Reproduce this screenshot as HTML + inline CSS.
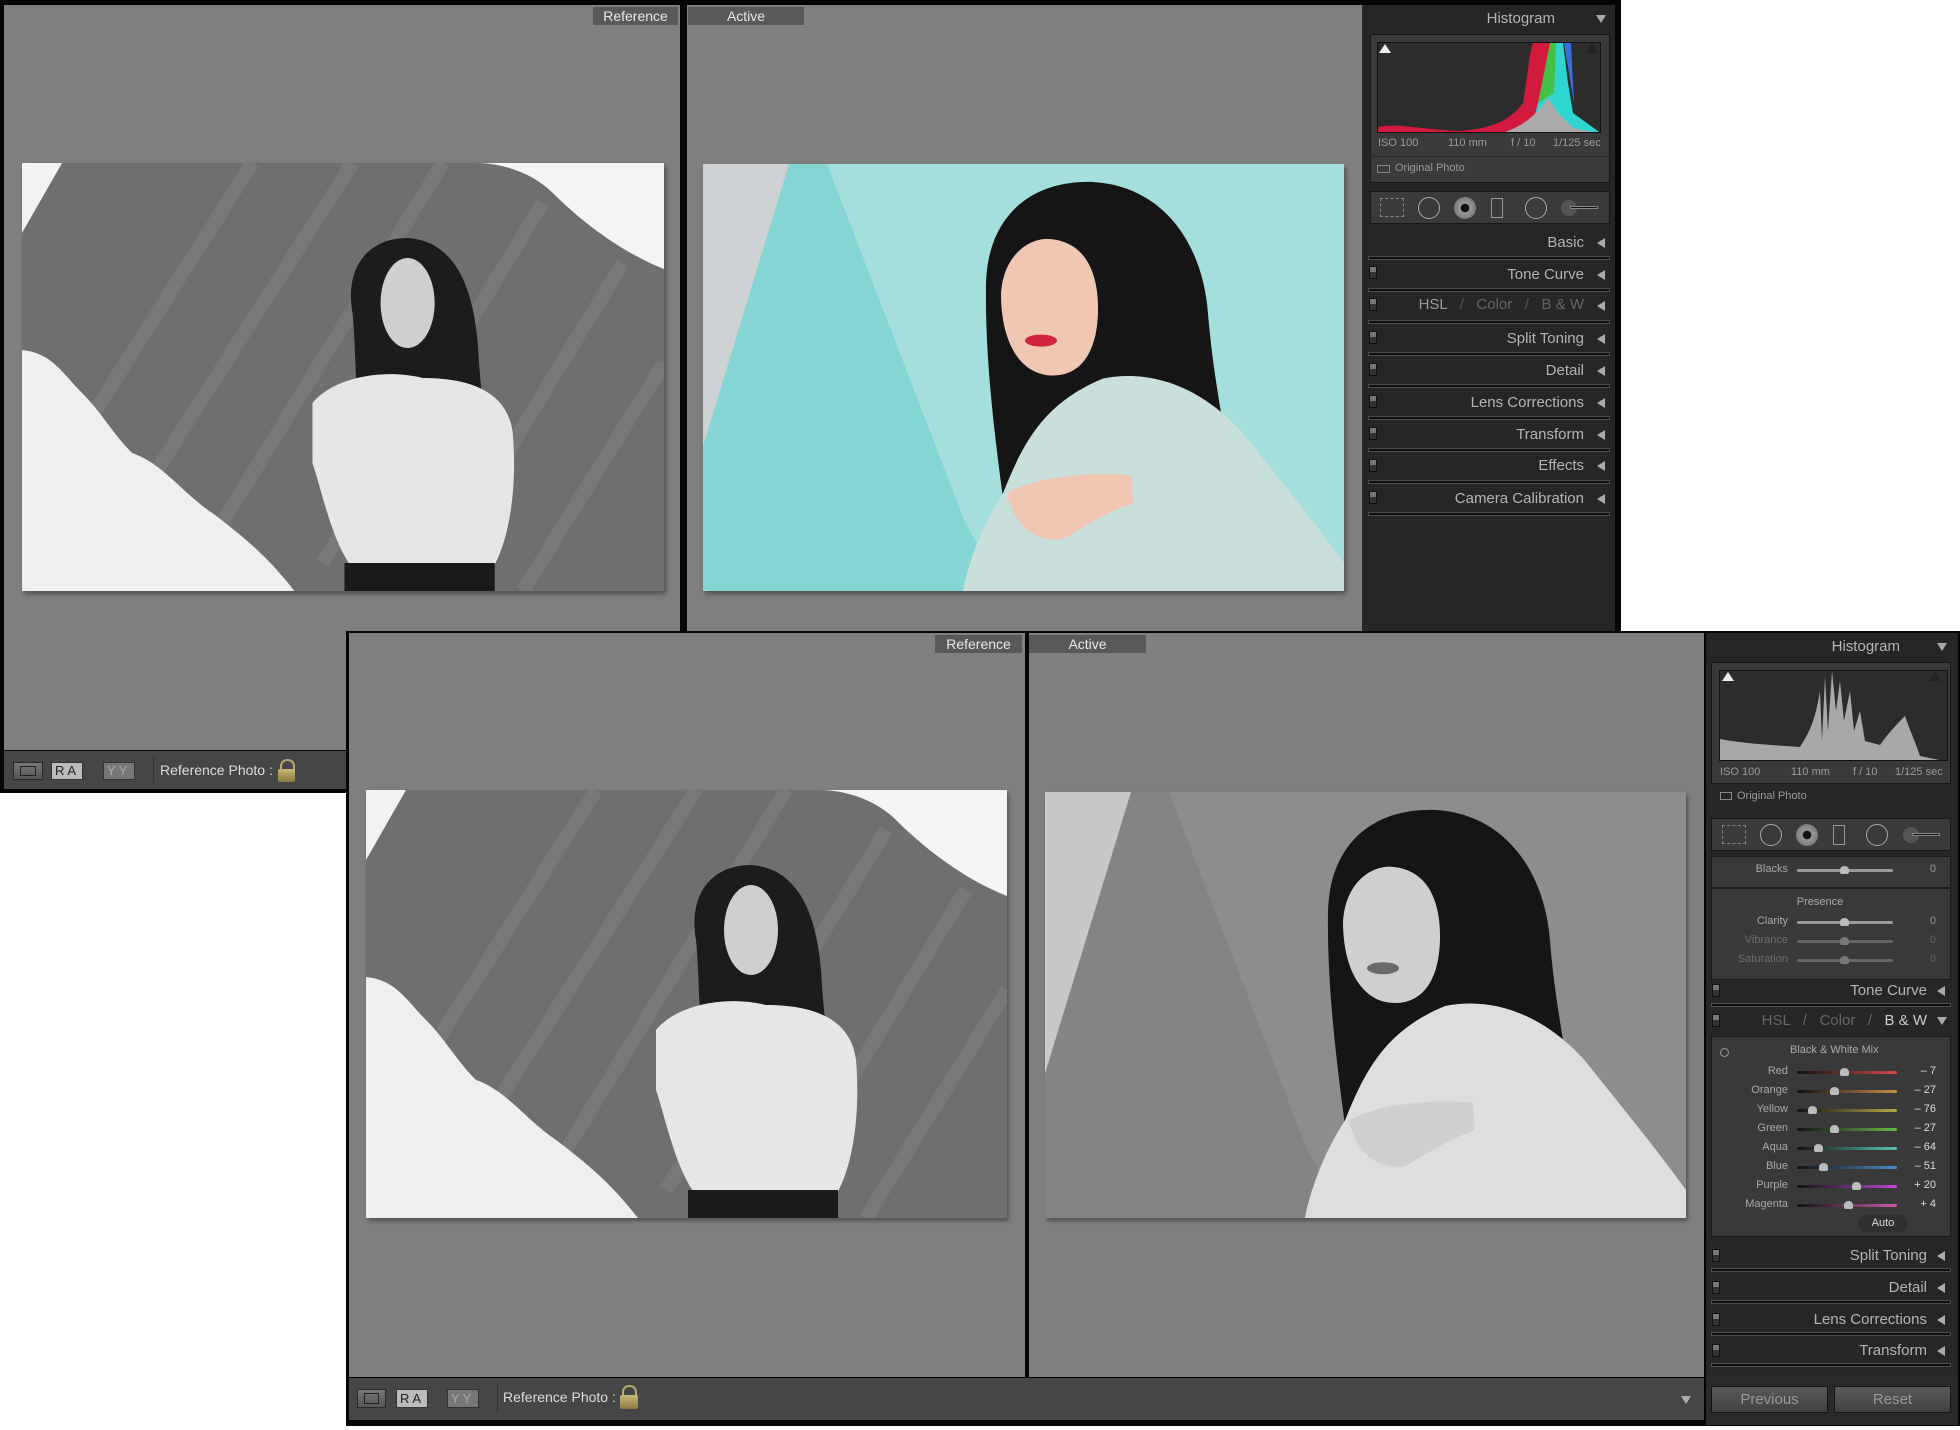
<!DOCTYPE html>
<html><head><meta charset="utf-8"><style>
*{margin:0;padding:0;box-sizing:border-box}
body{width:1960px;height:1430px;background:#fff;position:relative;overflow:hidden;font-family:"Liberation Sans",sans-serif}
.a{position:absolute}
.view{background:#7f7f7f}
.tab{position:absolute;background:#595959;color:#e8e8e8;font-size:14px;line-height:18px;text-align:center}
.panel{background:#262626}
.hd{position:absolute;color:#b4b4b4;font-size:15px;white-space:nowrap;text-align:right}
.tri{position:absolute;width:0;height:0;border-top:5px solid transparent;border-bottom:5px solid transparent;border-right:8px solid #aaa}
.trid{position:absolute;width:0;height:0;border-left:5px solid transparent;border-right:5px solid transparent;border-top:8px solid #aaa}
.sep{position:absolute;height:4px;border:1px solid #4c4c4c;background:#0e0e0e}
.tg{position:absolute;width:8px;height:13px;background:linear-gradient(#777 0 45%,#333 45%);border:1px solid #111}
.box{position:absolute;background:#3a3a3a;border:1px solid #171717}
.info{position:absolute;color:#9a9a9a;font-size:11px;white-space:nowrap}
.tb{position:absolute;background:#464646}
.btn{position:absolute;background:linear-gradient(#777,#555);border:1px solid #2a2a2a}
.lbl{position:absolute;color:#aaa;font-size:11px;text-align:right;width:80px}
.val{position:absolute;color:#ddd;font-size:11px;text-align:right;width:40px}
.trk{position:absolute;height:3px;border-radius:2px}
.knob{position:absolute;width:9px;height:8px;background:#bbb;border-radius:50% 50% 2px 2px}
</style></head><body>
<svg width="0" height="0" style="position:absolute">
<defs>
<symbol id="refp" viewBox="0 0 641 428" preserveAspectRatio="none">
<rect width="641" height="428" fill="#6f6f6f"/>
<g stroke="#8a8a8a" stroke-width="14" opacity=".35">
<line x1="40" y1="300" x2="230" y2="0"/><line x1="120" y1="330" x2="330" y2="0"/><line x1="200" y1="360" x2="420" y2="0"/><line x1="300" y1="400" x2="520" y2="40"/><line x1="400" y1="428" x2="600" y2="100"/><line x1="500" y1="428" x2="641" y2="200"/></g>
<path d="M0 0H40L0 70Z" fill="#f2f2f2"/>
<path d="M453 0H641V106C600 90 560 60 530 30C510 10 480 0 453 0Z" fill="#f4f4f4"/>
<path d="M0 187C30 190 40 210 60 230C80 250 90 270 110 290C140 300 160 330 190 350C230 380 250 400 272 428H0Z" fill="#efefef"/>
<path d="M330 150C322 105 345 75 385 75C430 78 450 120 455 180C458 230 462 260 470 285L340 285C332 240 334 190 330 150Z" fill="#1c1c1c"/>
<ellipse cx="385" cy="140" rx="27" ry="45" fill="#cfcfcf"/>
<path d="M290 240C310 215 360 205 400 215C450 215 485 230 490 270C495 330 485 380 470 405H330C310 380 300 330 290 300Z" fill="#e6e6e6"/>
<rect x="322" y="400" width="150" height="28" fill="#1a1a1a"/>
</symbol>
<symbol id="actp" viewBox="0 0 641 428" preserveAspectRatio="none">
<rect width="641" height="428" fill="var(--bg)"/>
<path d="M0 0H124L262 359L300 428H0Z" fill="var(--pn)"/>
<path d="M0 0H86L0 283Z" fill="var(--gr)"/>
<path d="M283 120C285 50 330 16 390 18C460 22 500 80 505 150C510 210 520 260 532 329L300 335C290 260 282 190 283 120Z" fill="#151515"/>
<path d="M298 130C300 95 322 75 345 75C380 77 395 105 395 145C395 185 380 212 350 212C318 212 298 180 298 130Z" fill="var(--sk)"/>
<ellipse cx="338" cy="177" rx="16" ry="6" fill="var(--lp)"/>
<path d="M260 428C265 400 280 360 300 330C320 280 340 240 400 215C450 205 500 225 540 270C580 320 620 370 641 400V428Z" fill="var(--sw)"/>
<path d="M304 330C330 315 380 308 428 312L430 340C400 350 380 365 360 376C330 380 310 360 304 330Z" fill="var(--sk)"/>
</symbol>
</defs></svg>

<!-- TOP WINDOW -->
<div class="a" style="left:0;top:0;width:1621px;height:793px;background:#050505"></div>
<div class="a view" style="left:4px;top:5px;width:676px;height:745px"></div>
<div class="a view" style="left:687px;top:5px;width:675px;height:745px"></div>
<div class="tab" style="left:593px;top:7px;width:85px">Reference</div>
<div class="tab" style="left:688px;top:7px;width:116px">Active</div>
<svg class="a" style="left:22px;top:163px;box-shadow:2px 3px 4px rgba(0,0,0,.35)" width="642" height="428"><use href="#refp" width="642" height="428"/></svg>
<svg class="a" style="left:703px;top:164px;box-shadow:2px 3px 4px rgba(0,0,0,.35);--bg:#a4dfdd;--pn:#85d5d3;--gr:#cfd2d4;--sk:#efc7b3;--lp:#d0243e;--sw:#c9dfdc" width="641" height="427"><use href="#actp" width="641" height="427"/></svg>
<div class="tb" style="left:4px;top:751px;width:680px;height:38px"></div>
<div class="btn" style="left:13px;top:762px;width:30px;height:18px"><div style="margin:3px 6px;height:10px;border:1px solid #222"></div></div>
<div class="a" style="left:51px;top:762px;width:32px;height:18px;background:#bbb;border:1px solid #333;font-size:13px;color:#222;line-height:16px;letter-spacing:3px;padding-left:3px">RA</div>
<div class="a" style="left:103px;top:762px;width:32px;height:18px;background:#777;border:1px solid #333;font-size:13px;color:#aaa;line-height:16px;letter-spacing:3px;padding-left:3px">YY</div>
<div class="a" style="left:153px;top:757px;width:1px;height:26px;background:#333"></div>
<div class="a" style="left:160px;top:762px;color:#ddd;font-size:14px">Reference Photo :</div>
<div class="a" style="left:280px;top:759px;width:15px;height:12px;border:2px solid #b7a870;border-bottom:none;border-radius:7px 7px 0 0"></div>
<div class="a" style="left:278px;top:769px;width:17px;height:13px;background:linear-gradient(#c8b878,#8a7a40);border-radius:2px"></div>
<!-- top panel -->
<div class="a panel" style="left:1362px;top:5px;width:253px;height:786px"></div>
<div class="hd" style="right:405px;top:10px">Histogram</div>
<div class="trid" style="left:1596px;top:15px"></div>
<div class="box" style="left:1370px;top:34px;width:240px;height:149px"></div>
<div class="a" style="left:1377px;top:42px;width:224px;height:91px;background:#2c2c2c;border:1px solid #111;overflow:hidden">
<svg width="224" height="91"><path d="M0 91V84C20 80 40 86 80 88C110 86 130 80 145 60C150 30 152 5 155 0H175L177 40L185 80L224 91Z" fill="#d21a3c"/><path d="M152 91L160 60L170 20L175 0H185L190 40L195 70L224 91Z" fill="#2fd5d0"/><path d="M160 60L168 20L172 0H178L176 50Z" fill="#44c044"/><path d="M186 0H193L196 60L200 85Z" fill="#3a6ed8"/><path d="M120 91C145 85 160 70 170 55L180 70L195 85L224 91Z" fill="#aaa"/></svg></div>
<div class="a" style="left:1379px;top:44px;border-left:6px solid transparent;border-right:6px solid transparent;border-bottom:9px solid #eee"></div>
<div class="a" style="left:1586px;top:44px;border-left:6px solid transparent;border-right:6px solid transparent;border-bottom:9px solid #222"></div>
<div class="info" style="left:1378px;top:137px">ISO 100</div>
<div class="info" style="left:1448px;top:137px">110 mm</div>
<div class="info" style="left:1511px;top:137px">f / 10</div>
<div class="info" style="left:1553px;top:137px">1/125 sec</div>
<div class="a" style="left:1370px;top:156px;width:240px;height:1px;background:#2a2a2a"></div>
<div class="a" style="left:1377px;top:165px;width:13px;height:8px;border:1px solid #888"></div>
<div class="info" style="left:1395px;top:162px">Original Photo</div>
<div class="box" style="left:1370px;top:191px;width:240px;height:33px"></div>
<div class="a" style="left:1380px;top:198px;width:24px;height:19px;border:1px dashed #888"></div>
<div class="a" style="left:1418px;top:197px;width:22px;height:22px;border:1px solid #aaa;border-radius:50%"></div>
<div class="a" style="left:1454px;top:197px;width:22px;height:22px;background:radial-gradient(#111 25%,#999 30%,#666);border-radius:50%"></div>
<div class="a" style="left:1491px;top:198px;width:12px;height:20px;border:1px solid #999"></div>
<div class="a" style="left:1525px;top:197px;width:22px;height:22px;border:1px solid #aaa;border-radius:50%"></div>
<div class="a" style="left:1561px;top:200px;width:16px;height:16px;background:#555;border-radius:50%"></div>
<div class="a" style="left:1570px;top:206px;width:28px;height:3px;background:#111;border:1px solid #888"></div>
<div class="hd" style="right:376px;top:234px">Basic</div><div class="tri" style="left:1597px;top:238px"></div><div class="sep" style="left:1368px;top:256px;width:242px"></div>
<div class="tg" style="left:1369px;top:266px"></div><div class="hd" style="right:376px;top:266px">Tone Curve</div><div class="tri" style="left:1597px;top:270px"></div><div class="sep" style="left:1368px;top:288px;width:242px"></div>
<div class="tg" style="left:1369px;top:298px"></div><div class="hd" style="right:376px;top:296px;color:#999">HSL &nbsp; <span style="color:#555">/</span> &nbsp; <span style="color:#666">Color</span> &nbsp; <span style="color:#555">/</span> &nbsp; <span style="color:#666">B &amp; W</span></div><div class="tri" style="left:1597px;top:301px"></div><div class="sep" style="left:1368px;top:320px;width:242px"></div>
<div class="tg" style="left:1369px;top:331px"></div><div class="hd" style="right:376px;top:330px">Split Toning</div><div class="tri" style="left:1597px;top:334px"></div><div class="sep" style="left:1368px;top:352px;width:242px"></div>
<div class="tg" style="left:1369px;top:363px"></div><div class="hd" style="right:376px;top:362px">Detail</div><div class="tri" style="left:1597px;top:366px"></div><div class="sep" style="left:1368px;top:384px;width:242px"></div>
<div class="tg" style="left:1369px;top:395px"></div><div class="hd" style="right:376px;top:394px">Lens Corrections</div><div class="tri" style="left:1597px;top:398px"></div><div class="sep" style="left:1368px;top:416px;width:242px"></div>
<div class="tg" style="left:1369px;top:427px"></div><div class="hd" style="right:376px;top:426px">Transform</div><div class="tri" style="left:1597px;top:430px"></div><div class="sep" style="left:1368px;top:448px;width:242px"></div>
<div class="tg" style="left:1369px;top:459px"></div><div class="hd" style="right:376px;top:457px">Effects</div><div class="tri" style="left:1597px;top:461px"></div><div class="sep" style="left:1368px;top:480px;width:242px"></div>
<div class="tg" style="left:1369px;top:491px"></div><div class="hd" style="right:376px;top:490px">Camera Calibration</div><div class="tri" style="left:1597px;top:494px"></div><div class="sep" style="left:1368px;top:512px;width:242px"></div>

<!-- BOTTOM WINDOW -->
<div class="a" style="left:346px;top:631px;width:1614px;height:795px;background:#050505"></div>
<div class="a view" style="left:349px;top:633px;width:676px;height:744px"></div>
<div class="a view" style="left:1029px;top:633px;width:675px;height:744px"></div>
<div class="tab" style="left:935px;top:635px;width:87px">Reference</div>
<div class="tab" style="left:1029px;top:635px;width:117px">Active</div>
<svg class="a" style="left:366px;top:790px;box-shadow:2px 3px 4px rgba(0,0,0,.35)" width="641" height="428"><use href="#refp" width="641" height="428"/></svg>
<svg class="a" style="left:1045px;top:792px;box-shadow:2px 3px 4px rgba(0,0,0,.35);--bg:#8d8d8d;--pn:#848484;--gr:#c8c8c8;--sk:#cfcfcf;--lp:#6a6a6a;--sw:#dedede" width="641" height="426"><use href="#actp" width="641" height="426"/></svg>
<div class="tb" style="left:349px;top:1378px;width:1355px;height:42px"></div>
<div class="btn" style="left:357px;top:1389px;width:29px;height:19px"><div style="margin:3px 6px;height:11px;border:1px solid #222"></div></div>
<div class="a" style="left:396px;top:1389px;width:32px;height:19px;background:#bbb;border:1px solid #333;font-size:13px;color:#222;line-height:17px;letter-spacing:3px;padding-left:3px">RA</div>
<div class="a" style="left:447px;top:1389px;width:32px;height:19px;background:#777;border:1px solid #333;font-size:13px;color:#aaa;line-height:17px;letter-spacing:3px;padding-left:3px">YY</div>
<div class="a" style="left:497px;top:1383px;width:1px;height:30px;background:#333"></div>
<div class="a" style="left:503px;top:1389px;color:#ddd;font-size:14px">Reference Photo :</div>
<div class="a" style="left:622px;top:1385px;width:15px;height:12px;border:2px solid #b7a870;border-bottom:none;border-radius:7px 7px 0 0"></div>
<div class="a" style="left:620px;top:1395px;width:18px;height:14px;background:linear-gradient(#c8b878,#8a7a40);border-radius:2px"></div>
<div class="trid" style="left:1681px;top:1396px"></div>
<!-- bottom panel -->
<div class="a panel" style="left:1706px;top:633px;width:252px;height:792px"></div>
<div class="hd" style="right:60px;top:638px">Histogram</div>
<div class="trid" style="left:1937px;top:643px"></div>
<div class="box" style="left:1711px;top:662px;width:240px;height:122px"></div>
<div class="a" style="left:1719px;top:670px;width:229px;height:91px;background:#2c2c2c;border:1px solid #111;overflow:hidden">
<svg width="229" height="91"><path d="M0 91V68C20 72 50 74 80 76C90 60 95 50 100 20L102 70L105 5L108 60L112 0L116 40L120 10L124 50L130 20L134 60L140 40L145 70L160 74C170 60 180 50 185 45C190 60 195 70 200 85L229 91Z" fill="#a8a8a8"/></svg></div>
<div class="a" style="left:1722px;top:672px;border-left:6px solid transparent;border-right:6px solid transparent;border-bottom:9px solid #eee"></div>
<div class="a" style="left:1929px;top:672px;border-left:6px solid transparent;border-right:6px solid transparent;border-bottom:9px solid #222"></div>
<div class="info" style="left:1720px;top:766px">ISO 100</div>
<div class="info" style="left:1791px;top:766px">110 mm</div>
<div class="info" style="left:1853px;top:766px">f / 10</div>
<div class="info" style="left:1895px;top:766px">1/125 sec</div>
<div class="a" style="left:1720px;top:792px;width:12px;height:8px;border:1px solid #888"></div>
<div class="info" style="left:1737px;top:790px">Original Photo</div>
<div class="box" style="left:1711px;top:818px;width:240px;height:33px"></div>
<div class="a" style="left:1722px;top:825px;width:24px;height:19px;border:1px dashed #888"></div>
<div class="a" style="left:1760px;top:824px;width:22px;height:22px;border:1px solid #aaa;border-radius:50%"></div>
<div class="a" style="left:1796px;top:824px;width:22px;height:22px;background:radial-gradient(#111 25%,#999 30%,#666);border-radius:50%"></div>
<div class="a" style="left:1833px;top:825px;width:12px;height:20px;border:1px solid #999"></div>
<div class="a" style="left:1866px;top:824px;width:22px;height:22px;border:1px solid #aaa;border-radius:50%"></div>
<div class="a" style="left:1903px;top:827px;width:16px;height:16px;background:#555;border-radius:50%"></div>
<div class="a" style="left:1912px;top:833px;width:28px;height:3px;background:#111;border:1px solid #888"></div>
<!-- basic partial -->
<div class="a" style="left:1711px;top:856px;width:240px;height:124px;background:#393939;border:1px solid #1a1a1a"></div>
<div class="a" style="left:1711px;top:887px;width:240px;height:2px;background:#1e1e1e"></div>
<div class="lbl" style="left:1708px;top:863px">Blacks</div><div class="trk" style="left:1797px;top:869px;width:96px;background:#999"></div><div class="knob" style="left:1840px;top:866px"></div><div class="val" style="left:1896px;top:863px;color:#999">0</div>
<div class="a" style="left:1790px;top:896px;width:60px;text-align:center;color:#aaa;font-size:11px">Presence</div>
<div class="lbl" style="left:1708px;top:915px">Clarity</div><div class="trk" style="left:1797px;top:921px;width:96px;background:#999"></div><div class="knob" style="left:1840px;top:918px"></div><div class="val" style="left:1896px;top:915px;color:#999">0</div>
<div class="lbl" style="left:1708px;top:934px;color:#6e6e6e">Vibrance</div><div class="trk" style="left:1797px;top:940px;width:96px;background:#666"></div><div class="knob" style="left:1840px;top:937px;background:#777"></div><div class="val" style="left:1896px;top:934px;color:#666">0</div>
<div class="lbl" style="left:1708px;top:953px;color:#6e6e6e">Saturation</div><div class="trk" style="left:1797px;top:959px;width:96px;background:#666"></div><div class="knob" style="left:1840px;top:956px;background:#777"></div><div class="val" style="left:1896px;top:953px;color:#666">0</div>
<div class="tg" style="left:1712px;top:984px"></div><div class="hd" style="right:33px;top:982px">Tone Curve</div><div class="tri" style="left:1937px;top:986px"></div><div class="sep" style="left:1711px;top:1003px;width:240px"></div>
<div class="tg" style="left:1712px;top:1014px"></div><div class="hd" style="right:33px;top:1012px;color:#666">HSL &nbsp; / &nbsp; Color &nbsp; / &nbsp; <span style="color:#ccc">B &amp; W</span></div><div class="trid" style="left:1937px;top:1017px"></div>
<div class="a" style="left:1711px;top:1036px;width:240px;height:201px;background:#393939;border:1px solid #1a1a1a"></div>
<div class="a" style="left:1720px;top:1048px;width:9px;height:9px;border:1px solid #999;border-radius:50%"></div>
<div class="a" style="left:1790px;top:1044px;color:#aaa;font-size:11px">Black &amp; White Mix</div>
<div class="lbl" style="left:1708px;top:1065px">Red</div><div class="trk" style="left:1797px;top:1071px;width:100px;background:linear-gradient(90deg,#111,#d14a4a)"></div><div class="knob" style="left:1840px;top:1068px"></div><div class="val" style="left:1896px;top:1065px">– 7</div>
<div class="lbl" style="left:1708px;top:1084px">Orange</div><div class="trk" style="left:1797px;top:1090px;width:100px;background:linear-gradient(90deg,#111,#c88a4a)"></div><div class="knob" style="left:1830px;top:1087px"></div><div class="val" style="left:1896px;top:1084px">– 27</div>
<div class="lbl" style="left:1708px;top:1103px">Yellow</div><div class="trk" style="left:1797px;top:1109px;width:100px;background:linear-gradient(90deg,#111,#b8a84a)"></div><div class="knob" style="left:1808px;top:1106px"></div><div class="val" style="left:1896px;top:1103px">– 76</div>
<div class="lbl" style="left:1708px;top:1122px">Green</div><div class="trk" style="left:1797px;top:1128px;width:100px;background:linear-gradient(90deg,#111,#6ab84a)"></div><div class="knob" style="left:1830px;top:1125px"></div><div class="val" style="left:1896px;top:1122px">– 27</div>
<div class="lbl" style="left:1708px;top:1141px">Aqua</div><div class="trk" style="left:1797px;top:1147px;width:100px;background:linear-gradient(90deg,#111,#5ac4b0)"></div><div class="knob" style="left:1814px;top:1144px"></div><div class="val" style="left:1896px;top:1141px">– 64</div>
<div class="lbl" style="left:1708px;top:1160px">Blue</div><div class="trk" style="left:1797px;top:1166px;width:100px;background:linear-gradient(90deg,#111,#4a8ac8)"></div><div class="knob" style="left:1819px;top:1163px"></div><div class="val" style="left:1896px;top:1160px">– 51</div>
<div class="lbl" style="left:1708px;top:1179px">Purple</div><div class="trk" style="left:1797px;top:1185px;width:100px;background:linear-gradient(90deg,#111,#b84ad0)"></div><div class="knob" style="left:1852px;top:1182px"></div><div class="val" style="left:1896px;top:1179px">+ 20</div>
<div class="lbl" style="left:1708px;top:1198px">Magenta</div><div class="trk" style="left:1797px;top:1204px;width:100px;background:linear-gradient(90deg,#111,#c85aa8)"></div><div class="knob" style="left:1844px;top:1201px"></div><div class="val" style="left:1896px;top:1198px">+ 4</div>
<div class="a" style="left:1858px;top:1215px;width:50px;height:17px;background:#303030;border-radius:9px;color:#ddd;font-size:11px;text-align:center;line-height:17px">Auto</div>
<div class="tg" style="left:1712px;top:1249px"></div><div class="hd" style="right:33px;top:1247px">Split Toning</div><div class="tri" style="left:1937px;top:1251px"></div><div class="sep" style="left:1711px;top:1268px;width:240px"></div>
<div class="tg" style="left:1712px;top:1281px"></div><div class="hd" style="right:33px;top:1279px">Detail</div><div class="tri" style="left:1937px;top:1283px"></div><div class="sep" style="left:1711px;top:1300px;width:240px"></div>
<div class="tg" style="left:1712px;top:1313px"></div><div class="hd" style="right:33px;top:1311px">Lens Corrections</div><div class="tri" style="left:1937px;top:1315px"></div><div class="sep" style="left:1711px;top:1332px;width:240px"></div>
<div class="tg" style="left:1712px;top:1344px"></div><div class="hd" style="right:33px;top:1342px">Transform</div><div class="tri" style="left:1937px;top:1346px"></div><div class="sep" style="left:1711px;top:1363px;width:240px"></div>
<div class="a" style="left:1706px;top:1376px;width:252px;height:49px;background:#2a2a2a"></div>
<div class="a" style="left:1711px;top:1386px;width:117px;height:27px;background:linear-gradient(#5a5a5a,#404040);border:1px solid #151515;color:#999;font-size:15px;text-align:center;line-height:25px">Previous</div>
<div class="a" style="left:1834px;top:1386px;width:117px;height:27px;background:linear-gradient(#5a5a5a,#404040);border:1px solid #151515;color:#999;font-size:15px;text-align:center;line-height:25px">Reset</div>
</body></html>
